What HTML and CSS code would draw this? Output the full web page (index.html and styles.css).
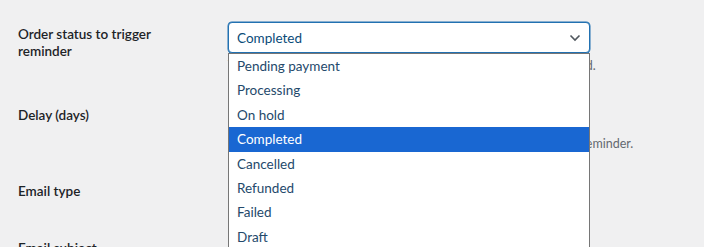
FILE: index.html
```html
<!DOCTYPE html>
<html lang="en">
<head>
    <meta charset="UTF-8">
    <meta name="viewport" content="width=device-width, initial-scale=1.0">
    <title>Review reminder settings</title>
    <link rel="stylesheet" href="styles.css">
</head>
<body>
    <div class="form-table">
        <div class="form-row row-status">
            <div class="field-label">Order status to trigger reminder</div>
            <div class="field">
                <div class="select-wrap">
                    <div class="select-box">
                        <span>Completed</span>
                        <svg class="chevron" width="12" height="8" viewBox="0 0 12 8">
                            <path d="M1.5 1.5 L6 6 L10.5 1.5" fill="none" stroke="#50575e" stroke-width="1.6"/>
                        </svg>
                    </div>
                    <ul class="dropdown">
                        <li>Pending payment</li>
                        <li>Processing</li>
                        <li>On hold</li>
                        <li class="selected">Completed</li>
                        <li>Cancelled</li>
                        <li>Refunded</li>
                        <li>Failed</li>
                        <li>Draft</li>
                    </ul>
                </div>
                <p class="description">The reminder is sent once an order gets this status, then scheduled.</p>
            </div>
        </div>

        <div class="form-row row-delay">
            <div class="field-label">Delay (days)</div>
            <div class="field">
                <div class="input-box">7</div>
                <p class="description">Number of days to wait after a status change before sending the reminder.</p>
            </div>
        </div>

        <div class="form-row row-type">
            <div class="field-label">Email type</div>
            <div class="field">
                <div class="input-box">HTML</div>
            </div>
        </div>

        <div class="form-row row-subject">
            <div class="field-label">Email subject</div>
            <div class="field">
                <div class="input-box">How was your order?</div>
            </div>
        </div>
    </div>
</body>
</html>
```

FILE: styles.css
```css
* {
    margin: 0;
    padding: 0;
    box-sizing: border-box;
}

body {
    font-family: 'Lato', 'Noto Sans', sans-serif;
    font-size: 13px;
    color: #1d2327;
    background: #f0f0f1;
    padding: 7px 0 0 18px;
    overflow: hidden;
}

.form-row {
    display: grid;
    grid-template-columns: 210px 362px;
}

.row-status {
    height: 81px;
}

.row-delay {
    height: 76px;
}

.row-type {
    height: 57px;
}

.field-label {
    font-size: 13.5px;
    font-weight: 600;
    line-height: 17px;
    padding-top: 19px;
    padding-right: 50px;
}

.field {
    padding-top: 15px;
}

.select-wrap {
    position: relative;
}

.select-box {
    height: 31px;
    background: #fff;
    border: 1px solid #2271b1;
    box-shadow: 0 0 0 0.5px #2271b1;
    border-radius: 4px;
    display: flex;
    align-items: center;
    justify-content: space-between;
    padding: 0 8px;
    color: #0a4b78;
    font-size: 13.5px;
}

.input-box {
    height: 30px;
    width: 120px;
    background: #fff;
    border: 1px solid #8c8f94;
    border-radius: 4px;
    padding: 0 8px;
    line-height: 28px;
    color: #2c3338;
}

.description {
    font-size: 12.5px;
    color: #646970;
    margin-top: 5px;
    white-space: nowrap;
}

.row-delay .description {
    margin-top: 3px;
}

/* open list of the select */
.dropdown {
    position: absolute;
    top: 31px;
    left: 0;
    width: 362px;
    list-style: none;
    background: #fff;
    border: 1px solid #767676;
    z-index: 5;
}

.dropdown li {
    height: 24.4px;
    line-height: 24.4px;
    padding-left: 8px;
    color: #24496b;
    font-size: 13.5px;
}

.dropdown li.selected {
    background: #1967d2;
    color: #fff;
}
```
